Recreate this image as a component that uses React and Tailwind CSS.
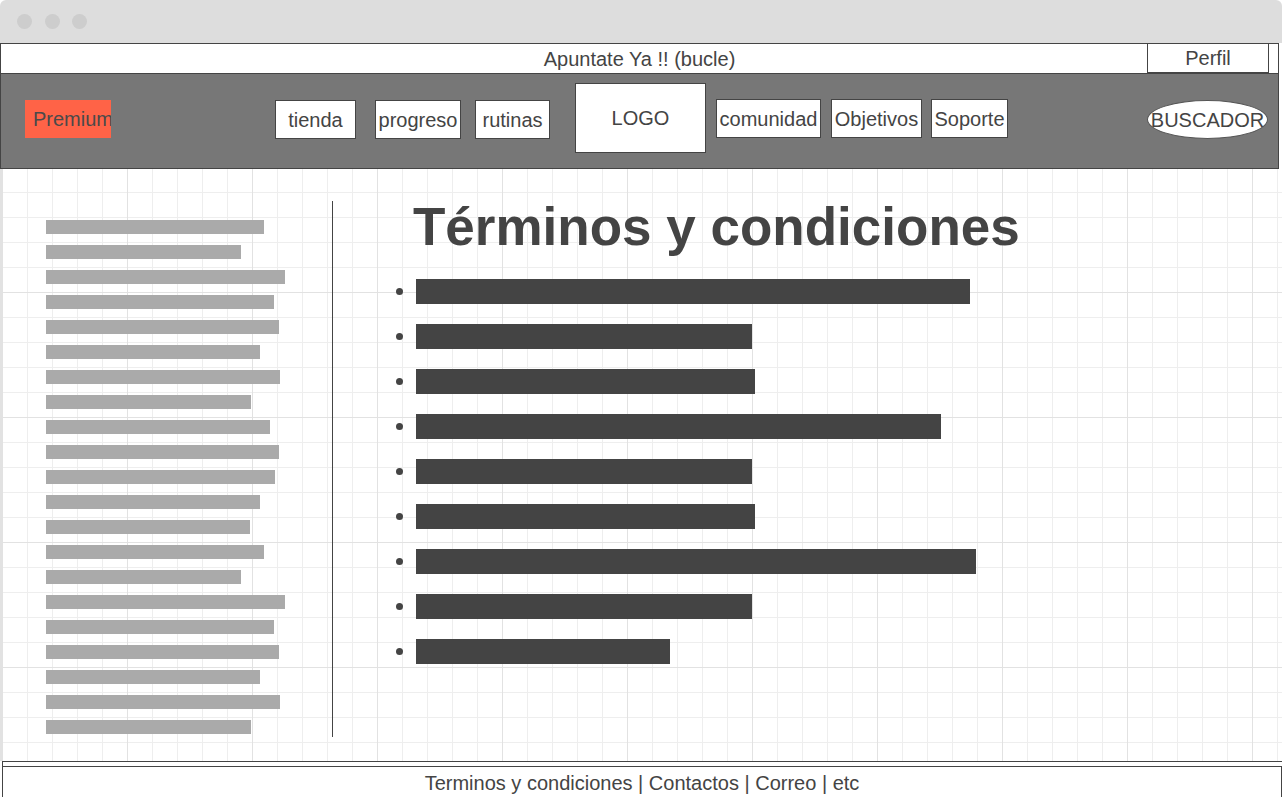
import React from "react";

const leftBars = [218, 195, 239, 228, 233, 214, 234, 205, 224, 233, 229, 214, 204, 218, 195, 239, 228, 233, 214, 234, 205];
const rightBars = [554, 336, 339, 525, 336, 339, 560, 336, 254];

function NavBox({ label, className }) {
  return (
    <div
      className={
        "flex items-center justify-center whitespace-nowrap border border-[#444] bg-white text-[20px] leading-none text-[#444] " +
        className
      }
    >
      {label}
    </div>
  );
}

export default function App() {
  return (
    <div className="w-[1282px] h-[797px] overflow-hidden bg-white flex flex-col font-['Liberation_Sans',Arial,sans-serif] text-[#444]">
      {/* window chrome */}
      <div className="h-[43px] shrink-0 bg-[#dddddd] rounded-t-[6px] flex items-center pl-[17px] gap-[12.5px]">
        <span className="w-[15px] h-[15px] rounded-full bg-[#cdcdcd]" />
        <span className="w-[15px] h-[15px] rounded-full bg-[#cdcdcd]" />
        <span className="w-[15px] h-[15px] rounded-full bg-[#cdcdcd]" />
      </div>

      {/* header */}
      <div className="w-[1279px] shrink-0 border-x border-[#444]">
        <div className="h-[31px] border-y border-[#444] bg-white grid grid-cols-[1fr_auto_1fr]">
          <div />
          <span className="self-center text-[20px] leading-[28px]">Apuntate Ya !! (bucle)</span>
          <div className="flex justify-end pr-[9px]">
            <div className="w-[122px] h-full border-x border-b border-[#444] flex items-center justify-center text-[20px] leading-none">
              Perfil
            </div>
          </div>
        </div>
        <nav className="h-[95px] bg-[#777777] border-b border-[#444] flex items-start">
          <div className="ml-[24px] mt-[26px] w-[86px] h-[38px] bg-[#ff6347] pl-[8px] overflow-hidden whitespace-nowrap text-[20px] leading-[38px] text-[#4a4a4a]">
            Premium
          </div>
          <NavBox label="tienda" className="ml-[164px] mt-[26px] w-[81px] h-[39px]" />
          <NavBox label="progreso" className="ml-[19px] mt-[26px] w-[86px] h-[39px]" />
          <NavBox label="rutinas" className="ml-[14px] mt-[26px] w-[75px] h-[39px]" />
          <NavBox label="LOGO" className="ml-[25px] mt-[9px] w-[131px] h-[70px]" />
          <NavBox label="comunidad" className="ml-[10px] mt-[25px] w-[105px] h-[39px]" />
          <NavBox label="Objetivos" className="ml-[10px] mt-[25px] w-[91px] h-[39px]" />
          <NavBox label="Soporte" className="ml-[9px] mt-[25px] w-[77px] h-[39px]" />
          <div className="ml-[139px] mt-[26px] w-[121px] h-[39px] rounded-[50%] bg-white border border-[#555] flex items-center justify-center whitespace-nowrap text-[20px] leading-none">
            BUSCADOR
          </div>
        </nav>
      </div>

      {/* content */}
      <main className="flex-1 flex border-l-2 border-[#e2e2e2] bg-white bg-[linear-gradient(to_right,#e2e2e2_1px,transparent_1px),linear-gradient(to_bottom,#e2e2e2_1px,transparent_1px),linear-gradient(to_right,#eeeeee_1px,transparent_1px),linear-gradient(to_bottom,#eeeeee_1px,transparent_1px)] bg-[size:125px_125px,125px_125px,25px_25px,25px_25px] bg-[position:0px_-2px]">
        <div className="w-[330px] shrink-0 pl-[44px] pt-[51px] flex flex-col gap-[11px]">
          {leftBars.map((w, i) => (
            <div key={i} className="h-[14px] bg-[#aaaaaa]" style={{ width: w }} />
          ))}
        </div>
        <div className="w-px h-[536px] mt-[32px] bg-[#444]" />
        <div className="ml-[63px] mt-[32px]">
          <h1 className="pl-[17px] text-[53px] leading-[52px] font-bold text-[#444] whitespace-nowrap">
            Términos y condiciones
          </h1>
          <ul className="mt-[26px] flex flex-col gap-[20px]">
            {rightBars.map((w, i) => (
              <li key={i} className="flex items-center">
                <span className="w-[7px] h-[7px] rounded-full bg-[#444]" />
                <span className="ml-[13px] h-[25px] bg-[#444]" style={{ width: w }} />
              </li>
            ))}
          </ul>
        </div>
      </main>

      {/* footer */}
      <footer className="h-[36px] shrink-0 ml-[2px] w-[1280px] border-t border-l border-[#444] pt-[4px]">
        <div className="w-[1279px] h-full border-t border-r border-[#444] bg-white pt-[5px] text-center text-[20px] leading-[23px]">
          Terminos y condiciones | Contactos | Correo | etc
        </div>
      </footer>
    </div>
  );
}
